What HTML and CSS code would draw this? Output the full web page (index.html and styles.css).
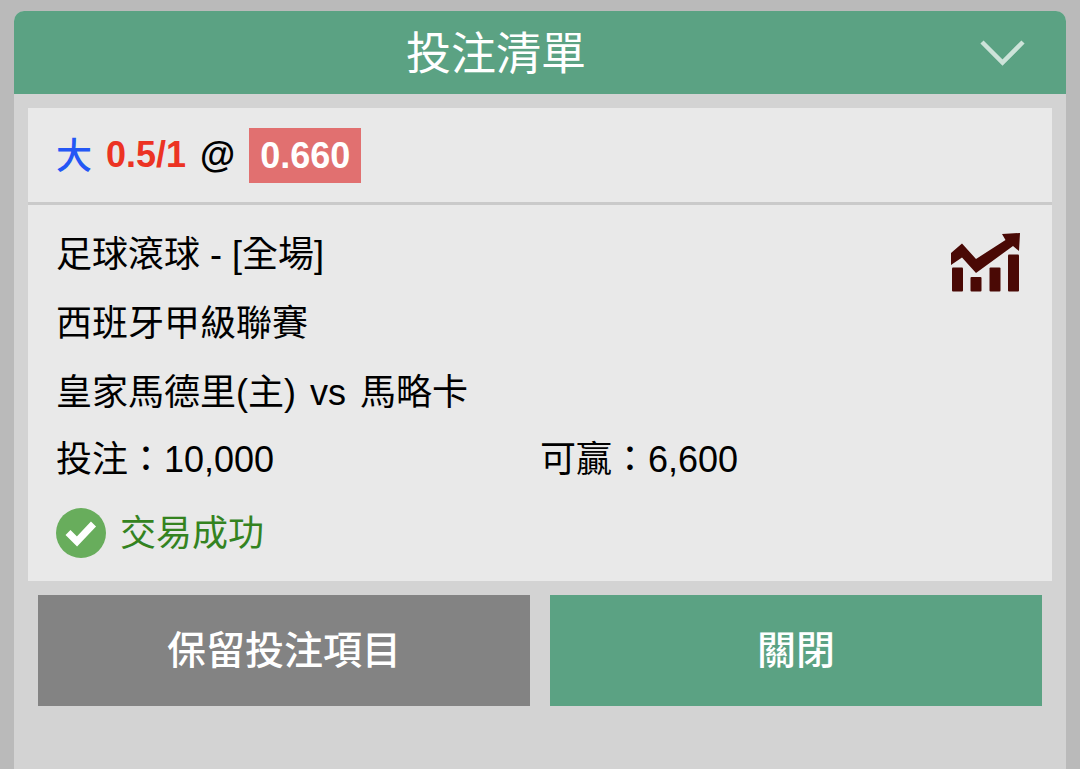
FILE: index.html
```
<!DOCTYPE html>
<html lang="zh-Hant">
<head>
  <meta charset="UTF-8" />
  <title>投注清單</title>
  <meta name="viewport" content="width=device-width, initial-scale=1" />
  <link rel="stylesheet" href="styles.css">
</head>
<body>
  <main class="slip">
    <header class="slip-header">
      <h1>投注清單</h1>
      <button class="collapse-btn" type="button" aria-label="收起">
        <svg width="48" height="30" viewBox="0 0 48 30" aria-hidden="true">
          <path d="M4 4 L24.500 24.500 L45 4" fill="none" stroke="#cde3d9" stroke-width="4.500" />
        </svg>
      </button>
    </header>

    <section class="bet">
      <div class="bet-odds">
        <span class="pick">大</span>
        <span class="line">0.5/1</span>
        <span class="at">@</span>
        <span class="price">0.660</span>
      </div>

      <div class="bet-body">
        <div class="bet-row bet-type">
          <span>足球滾球 - [全場]</span>
          <svg class="chart-icon" width="70" height="60" viewBox="0 0 70 60" fill="#4a0905" aria-hidden="true">
            <path d="M0 20 L11 10.500 L25 26 L54.500 7 L51 1 L69 0 L68 18 L62 13 L25 40 L11 24.500 L0 32 Z" />
            <rect x="1" y="34.500" width="11" height="24" rx="1" />
            <rect x="19.500" y="44" width="11" height="14.500" rx="1" />
            <rect x="38.500" y="34.500" width="11" height="24" rx="1" />
            <rect x="57" y="21.500" width="11" height="37" rx="1" />
          </svg>
        </div>
        <div class="bet-row">西班牙甲級聯賽</div>
        <div class="bet-row">皇家馬德里(主) <span class="versus">vs</span> 馬略卡</div>
        <div class="bet-row bet-amounts">
          <span>投注：10,000</span>
          <span>可贏：6,600</span>
        </div>
        <div class="bet-status">
          <svg width="50" height="50" viewBox="0 0 50 50" aria-hidden="true">
            <circle cx="25" cy="25" r="25" fill="#68ad5c" />
            <path d="M12 24.500 L21 33.500 L37.500 16" fill="none" stroke="#fff" stroke-width="7" />
          </svg>
          <span>交易成功</span>
        </div>
      </div>
    </section>

    <div class="actions">
      <button class="keep-btn" type="button">保留投注項目</button>
      <button class="close-btn" type="button">關閉</button>
    </div>
  </main>
</body>
</html>
```
FILE: styles.css
```
* {
  box-sizing: border-box;
}

body {
  margin: 0;
  padding: 11px 14px 0;
  background-color: #bababa;
  color: #000;
  font-family: "Liberation Sans", "Noto Sans CJK TC", sans-serif;
  font-size: 36px;
}

button {
  border: none;
  font-family: inherit;
  cursor: pointer;
}

.slip {
  min-height: calc(100vh - 11px);
  background-color: #d3d3d3;
  border-radius: 10px 10px 0 0;
  overflow: hidden;
}

.slip-header {
  display: flex;
  align-items: center;
  height: 83px;
  padding-right: 40px;
  background-color: #5ba283;
  color: #fff;
}

h1 {
  flex: 1;
  margin: 0;
  padding-bottom: 4px;
  font-size: 45px;
  font-weight: normal;
  text-align: center;
}

.collapse-btn {
  display: flex;
  padding: 0;
  background: none;
}

.bet {
  margin: 14px;
  background-color: #e9e9e9;
}

.bet-odds {
  display: flex;
  align-items: center;
  gap: 14px;
  height: 97px;
  padding: 0 28px;
  border-bottom: 3px solid #cacaca;
  font-weight: bold;
}

.pick {
  padding-bottom: 4px;
  color: #2457f5;
  font-weight: 500;
}

.line {
  color: #ec3323;
}

.price {
  padding: 0 11px;
  background-color: #e17070;
  color: #fff;
  line-height: 55px;
}

.bet-body {
  padding: 15px 28px 11px;
}

.bet-row {
  line-height: 69px;
}

.bet-type {
  display: flex;
  justify-content: space-between;
  height: 69px;
}

.chart-icon {
  margin: 13px 3px 0 0;
}

.versus {
  margin: 0 4px;
}

.bet-amounts {
  display: grid;
  grid-template-columns: 1fr 1fr;
  margin-bottom: 4px;
  line-height: 65px;
}

.bet-status {
  display: flex;
  align-items: center;
  gap: 14px;
  height: 74px;
  color: #34831f;
}

.bet-status span {
  padding-bottom: 6px;
}

.actions {
  display: grid;
  grid-template-columns: 1fr 1fr;
  gap: 20px;
  padding: 0 24px 24px;
}

.actions button {
  height: 111px;
  padding-bottom: 8px;
  color: #fff;
  font-size: 39px;
  font-weight: 500;
}

.keep-btn {
  background-color: #838383;
}

.close-btn {
  background-color: #5ba283;
}

@media (max-width: 600px) {
  body {
    font-size: 20px;
  }

  h1 {
    font-size: 26px;
  }

  .actions button {
    height: 60px;
    font-size: 20px;
  }
}
```
